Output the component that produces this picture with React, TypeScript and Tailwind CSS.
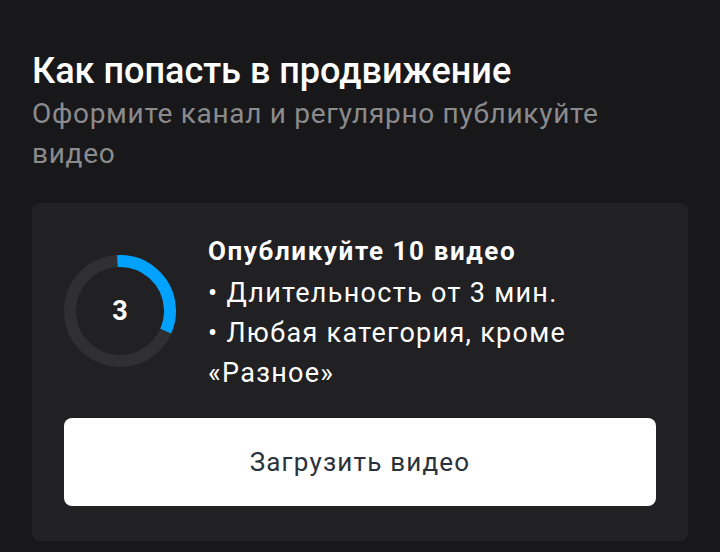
import React from "react";

function ProgressRing({ value, total }: { value: number; total: number }) {
  const r = 50;
  const c = 2 * Math.PI * r;
  const part = (value / total) * c * 1.08;
  return (
    <div className="relative h-[112px] w-[112px] shrink-0">
      <svg width="112" height="112" viewBox="0 0 112 112" className="-rotate-[93deg]">
        <circle cx="56" cy="56" r={r} fill="none" stroke="#303032" strokeWidth="12" />
        <circle
          cx="56"
          cy="56"
          r={r}
          fill="none"
          stroke="#00a2ff"
          strokeWidth="12"
          strokeDasharray={`${part} ${c}`}
        />
      </svg>
      <div className="absolute inset-0 flex items-center justify-center text-[27px] font-bold text-white">
        {value}
      </div>
    </div>
  );
}

export default function App() {
  return (
    <div className="h-[552px] w-[720px] overflow-hidden bg-[#18181a] px-8 pt-[49px] font-['Roboto','Noto_Sans',sans-serif]">
      <h1 className="text-[36px] font-medium leading-[44px] text-white">Как попасть в продвижение</h1>
      <p className="mt-[1px] text-[28px] leading-[40px] tracking-[0.7px] text-[#8b8b8d]">
        Оформите канал и регулярно публикуйте видео
      </p>

      <div className="mt-[29px] w-[656px] rounded-lg bg-[#212123] px-8 pt-[26px] pb-[35px]">
        <div className="flex items-center gap-8">
          <ProgressRing value={3} total={10} />
          <div className="text-white">
            <div className="text-[26px] font-bold leading-[44px] tracking-[1.6px]">Опубликуйте 10 видео</div>
            <div className="text-[27px] leading-[40px] tracking-[1.3px]">• Длительность от 3 мин.</div>
            <div className="text-[27px] leading-[40px] tracking-[1.3px]">
              • Любая категория, кроме
              <br />
              «Разное»
            </div>
          </div>
        </div>
        <button className="mt-[25px] flex h-[88px] w-full items-center justify-center rounded-lg bg-white text-[26px] tracking-[1.2px] text-[#2a323c]">
          Загрузить видео
        </button>
      </div>
    </div>
  );
}
